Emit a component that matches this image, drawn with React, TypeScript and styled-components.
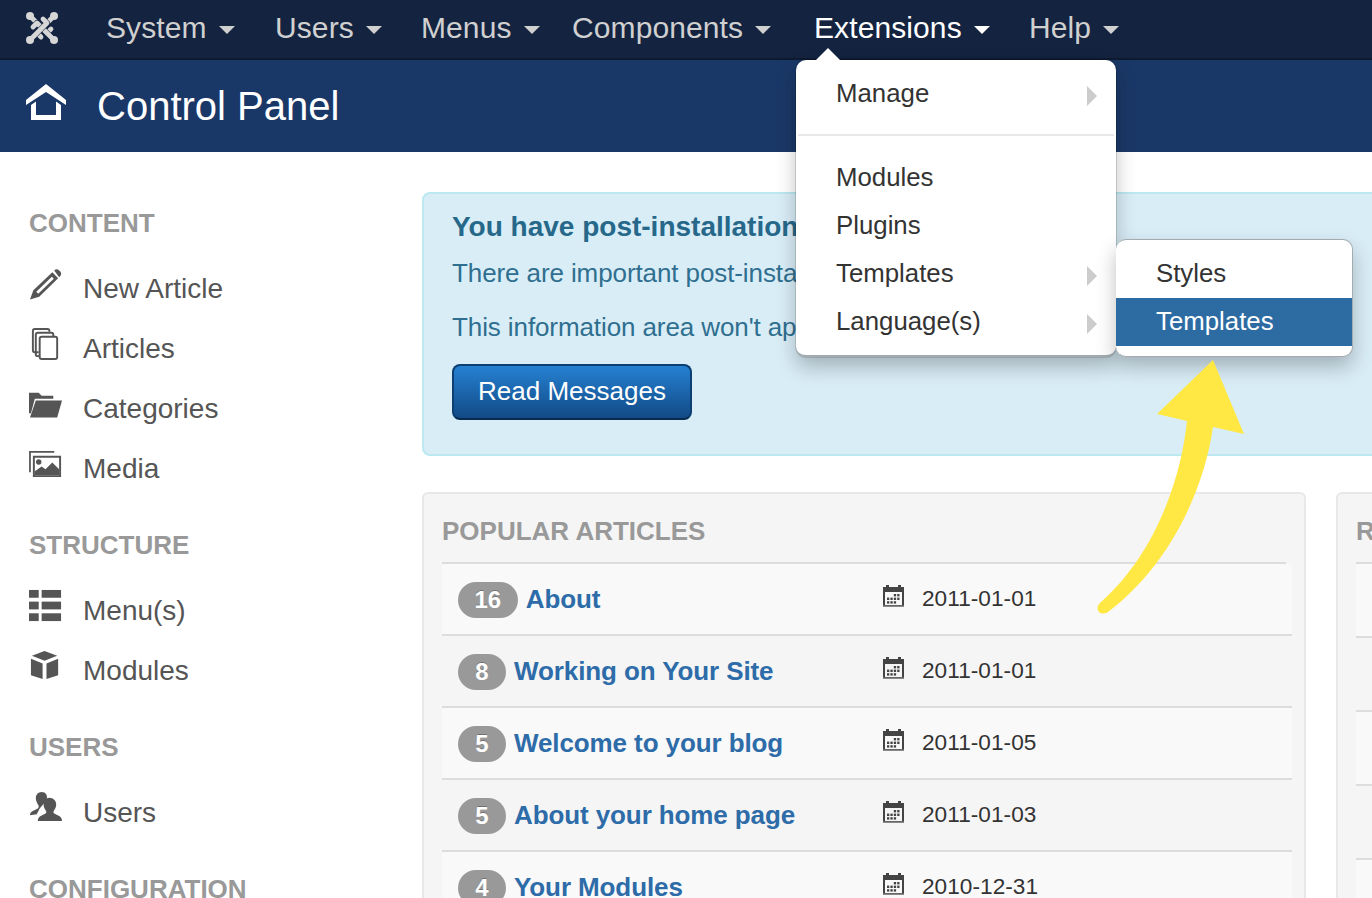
import React from "react";
import styled, { createGlobalStyle } from "styled-components";

const Global = createGlobalStyle`
  html, body { margin: 0; padding: 0; background: #fff; }
  body { font-family: "Liberation Sans", Arial, sans-serif; overflow: hidden; }
  * { box-sizing: border-box; }
`;

const Page = styled.div`
  position: relative;
  width: 1372px;
  height: 898px;
  overflow: hidden;
`;
const Navbar = styled.nav`
  height: 60px;
  background: #132340;
  border-bottom: 2px solid #0e1a30;
  display: flex;
  align-items: center;
  padding-left: 26px;
  color: #d9d9d9;
`;
const Logo = styled.svg`
  width: 32px;
  height: 32px;
  margin-right: 48px;
  margin-top: -2px;
`;
const NavItem = styled.div<{ $active?: boolean; $w: number }>`
  width: ${(p) => p.$w}px;
  display: flex;
  align-items: center;
  font-size: 30px;
  letter-spacing: 0.1px;
  margin-top: -2px;
  color: ${(p) => (p.$active ? "#fff" : "#d0d0d0")};
  white-space: nowrap;
`;
const Caret = styled.span`
  width: 0;
  height: 0;
  margin-left: 12px;
  margin-top: 3px;
  border-left: 8px solid transparent;
  border-right: 8px solid transparent;
  border-top: 8px solid currentColor;
`;
const Header = styled.header`
  height: 92px;
  background: #1a3867;
  display: flex;
  align-items: center;
  padding-left: 26px;
  color: #fff;
`;
const HomeIcon = styled.svg`
  width: 40px;
  height: 36px;
  margin-right: 31px;
  margin-top: -8px;
`;
const Title = styled.h1`
  margin: 0;
  font-weight: 400;
  font-size: 40px;
`;
const Body = styled.div`
  display: flex;
  padding-top: 40px;
`;
const Sidebar = styled.aside`
  width: 422px;
  flex: none;
  padding-left: 29px;
`;
const NavHead = styled.h3<{ $first?: boolean }>`
  margin: ${(p) => (p.$first ? 0 : 16)}px 0 4px;
  font-size: 26px;
  line-height: 62px;
  font-weight: 700;
  color: #999;
  white-space: nowrap;
`;
const SideItem = styled.div`
  height: 60px;
  padding-top: 2px;
  display: flex;
  align-items: center;
  font-size: 28px;
  color: #555;
`;
const SideIcon = styled.svg`
  width: 34px;
  height: 34px;
  margin-right: 20px;
  margin-top: -10px;
  flex: none;
  color: #555;
`;
const Main = styled.main`
  flex: none;
  width: 1000px;
`;
const Alert = styled.section`
  height: 264px;
  background: #d9edf7;
  border: 2px solid #bce8f1;
  border-radius: 8px;
  padding: 13px 0 0 28px;
  color: #2f6f8f;
  margin-bottom: 36px;
  white-space: nowrap;
`;
const AlertTitle = styled.h4`
  margin: 0 0 12px;
  font-size: 28px;
  line-height: 40px;
  font-weight: 700;
  color: #26688a;
`;
const AlertText = styled.p`
  margin: 0 0 26px;
  font-size: 26px;
  line-height: 28px;
  letter-spacing: -0.1px;
`;
const PrimaryButton = styled.button`
  display: block;
  width: 240px;
  height: 56px;
  margin-top: -3px;
  border: 2px solid #0d3f73;
  border-bottom-color: #082a50;
  border-radius: 8px;
  background: linear-gradient(#2581d2, #124a85);
  color: #fff;
  font: 400 26px "Liberation Sans", Arial, sans-serif;
  padding: 0 0 2px;
`;
const Panels = styled.div`
  display: flex;
  gap: 30px;
`;
const Panel = styled.section<{ $w: number }>`
  flex: none;
  width: ${(p) => p.$w}px;
  height: 440px;
  background: #f5f5f5;
  border: 2px solid #e8e8e8;
  border-radius: 6px;
  padding: 18px 0 0 18px;
`;
const PanelTitle = styled.h3`
  margin: 0 0 12px;
  font-size: 26px;
  line-height: 38px;
  font-weight: 700;
  color: #999;
  white-space: nowrap;
`;
const Rows = styled.div`
  margin-right: 18px;
  border-top: 2px solid #ddd;
`;
const Row = styled.div<{ $odd: boolean; $h: number }>`
  height: ${(p) => p.$h}px;
  margin-right: -6px;
  display: flex;
  align-items: center;
  padding: 2px 0 0 16px;
  background: ${(p) => (p.$odd ? "#f9f9f9" : "transparent")};
  border-bottom: 2px solid #ddd;
`;
const TitleCell = styled.div`
  width: 425px;
  display: flex;
  align-items: center;
  gap: 8px;
`;
const Badge = styled.span`
  min-width: 48px;
  height: 36px;
  padding: 0 16.5px;
  border-radius: 18px;
  background: #999;
  color: #fff;
  font-size: 24px;
  font-weight: 700;
  display: flex;
  align-items: center;
  justify-content: center;
  text-shadow: 0 -1px 0 rgba(0, 0, 0, 0.25);
`;
const ArticleLink = styled.span`
  font-size: 26px;
  font-weight: 700;
  color: #2d6ca8;
  white-space: nowrap;
  letter-spacing: -0.1px;
  margin-top: -2px;
`;
const DateCell = styled.div`
  display: flex;
  align-items: center;
  font-size: 22.6px;
  letter-spacing: 0.05px;
  color: #333;
  margin-top: -2px;
`;
const CalIcon = styled.svg`
  width: 21px;
  height: 24px;
  margin-right: 18px;
  margin-top: -6px;
`;
const Dropdown = styled.div`
  position: absolute;
  left: 796px;
  top: 60px;
  width: 320px;
  height: 297px;
  background: #fff;
  border-radius: 10px;
  border-bottom: 2px solid #a3abb0;
  box-shadow: 0 0 0 1px rgba(0,0,0,0.12), 0 10px 20px rgba(0, 0, 0, 0.25);
  padding-top: 10px;
  &::before {
    content: "";
    position: absolute;
    left: 19px;
    top: -12px;
    border-left: 13px solid transparent;
    border-right: 13px solid transparent;
    border-bottom: 13px solid #fff;
  }
`;
const MenuItem = styled.div<{ $active?: boolean }>`
  height: 48px;
  display: flex;
  align-items: center;
  justify-content: space-between;
  padding: 0 19px 2px 40px;
  font-size: 25.8px;
  color: ${(p) => (p.$active ? "#fff" : "#333")};
  background: ${(p) => (p.$active ? "#2d6ca2" : "transparent")};
`;
const MenuArrow = styled.span`
  width: 0;
  height: 0;
  margin-top: 6px;
  border-top: 10px solid transparent;
  border-bottom: 10px solid transparent;
  border-left: 10px solid #ccc;
`;
const Divider = styled.div`
  height: 2px;
  background: #e8e8e8;
  margin: 16px 2px 18px;
`;
const Submenu = styled.div`
  position: absolute;
  left: 1116px;
  top: 239px;
  width: 237px;
  height: 118px;
  background: #fff;
  border-radius: 10px;
  border: 1.5px solid #a3abb0;
  border-left: none;
  box-shadow: 0 10px 20px rgba(0, 0, 0, 0.25);
  padding-top: 10px;
  overflow: hidden;
`;
const Overlay = styled.svg`
  position: absolute;
  left: 0;
  top: 0;
  width: 1372px;
  height: 898px;
  pointer-events: none;
`;

const skipDots = new Set(["00", "01", "23"]);

const Cal = () => (
  <CalIcon viewBox="0 0 21 24">
    <path fill="#444" fillRule="evenodd" d="M0 3h3V1h3v2h9V1h3v2h3v20H0zM2 8v13h17V8z" />
    <g fill="#444">
      {[0, 1, 2].map((r) =>
        [0, 1, 2, 3].map((c) =>
          skipDots.has(`${r}${c}`) ? null : (
            <rect key={`${r}${c}`} x={4 + c * 3.4} y={10 + r * 3.6} width="2.3" height="2.4" />
          )
        )
      )}
    </g>
    <rect y="21.5" width="21" height="1.5" fill="#888" />
  </CalIcon>
);

const icons: Record<string, React.ReactNode> = {
  pencil: (
    <g fill="currentColor">
      <path fillRule="evenodd" d="M24 5.500 30 11.500 10.500 30.500 1 33.500 4.500 24zM23.500 10 7.500 25.500 9.500 27.500 25.500 12z" />
      <path d="M26 3.500c1.500-1.500 3.500-1.500 5 0l1 1c1.500 1.500 1.500 3.500 0 5l-1 1z" />
    </g>
  ),
  articles: (
    <>
      <path fill="none" stroke="currentColor" strokeWidth="2" d="M10 26H6a2 2 0 0 1-2-2V4a2 2 0 0 1 2-2h13a2 2 0 0 1 2 2v1" />
      <path fill="none" stroke="currentColor" strokeWidth="2" d="M11 30H9a2 2 0 0 1-2-2V8a2 2 0 0 1 2-2h14a2 2 0 0 1 2 2v2" />
      <rect x="11" y="10" width="18" height="23" rx="2" fill="#fff" stroke="currentColor" strokeWidth="2" />
    </>
  ),
  folder: (
    <path fill="currentColor" d="M0 6h10l3 3h12v3H6L2 27H0zm7 8h27l-5 17.500H1z" />
  ),
  media: (
    <>
      <path fill="none" stroke="currentColor" strokeWidth="1.800" d="M1 26V5h25" />
      <path fill="currentColor" fillRule="evenodd" d="M4 9h29v22H4zM6 11v18h25V11z" />
      <circle cx="10" cy="15.500" r="2.800" fill="currentColor" />
      <path fill="currentColor" d="M6 29v-4l7-5 4 3 7-7 7 7v6z" />
    </>
  ),
  menu: (
    <g fill="currentColor">
      <rect x="0" y="1" width="10" height="8" />
      <rect x="13" y="1" width="20" height="8" />
      <rect x="0" y="13" width="10" height="8" />
      <rect x="13" y="13" width="20" height="8" />
      <rect x="0" y="25" width="10" height="8" />
      <rect x="13" y="25" width="20" height="8" />
    </g>
  ),
  cube: (
    <g fill="currentColor">
      <path d="M16 2l13 5-13 5L3 7z" />
      <path d="M2 10l12 5v16L2 27z" />
      <path d="M30 10l-12 5v16l12-4z" />
    </g>
  ),
  users: (
    <g fill="currentColor">
      <path d="M13 1c4 0 6 3 5.500 6.500-.4 2-1.500 3.500-2.500 4.500l-5 6-3 6-7 1c0-2 1-3.500 3-4.500l5-2.500c1-.5 1.500-2 .5-3.500C8 12 7 10 7 7c0-3 2.500-6 6-6z" />
      <path d="M21 7c4 0 7 3 7 7 0 3-1.500 5-2.500 6.500-.6 1.200-.4 2.300 1 3l4 2c2 1 3.500 2.500 3.500 5.500H9c0-3 1.500-4.500 3.500-5.500l4-2c1.400-.7 1.600-1.800 1-3C16.500 19 15 17 15 14c0-4 2.500-7 6-7z" />
    </g>
  ),
};

const Side = ({ icon, label }: { icon: string; label: string }) => (
  <SideItem>
    <SideIcon viewBox="0 0 35 35">{icons[icon]}</SideIcon>
    {label}
  </SideItem>
);

const nav: [string, number, boolean?][] = [
  ["System", 169],
  ["Users", 146],
  ["Menus", 151],
  ["Components", 242],
  ["Extensions", 215, true],
  ["Help", 120],
];

const articles: [string, string, string][] = [
  ["16", "About", "2011-01-01"],
  ["8", "Working on Your Site", "2011-01-01"],
  ["5", "Welcome to your blog", "2011-01-05"],
  ["5", "About your home page", "2011-01-03"],
  ["4", "Your Modules", "2010-12-31"],
];

const hooks = [
  "M4 4 L21 21 L25 17",
  "M28 4 L11 21 L15 25",
  "M28 28 L11 11 L7 15",
  "M4 28 L21 11 L17 7",
];

export default function App() {
  return (
    <Page>
      <Global />
      <Navbar>
        <Logo viewBox="0 0 32 32">
          <g fill="none" strokeLinecap="round" strokeLinejoin="round">
            {hooks.map((d) => (
              <React.Fragment key={d}>
                <path d={d} stroke="#132340" strokeWidth="6" />
                <path d={d} stroke="#d6d6d6" strokeWidth="4.800" />
              </React.Fragment>
            ))}
          </g>
          <g fill="#d6d6d6">
            <circle cx="4" cy="4" r="4" />
            <circle cx="28" cy="4" r="4" />
            <circle cx="4" cy="28" r="4" />
            <circle cx="28" cy="28" r="4" />
          </g>
        </Logo>
        {nav.map(([label, w, active]) => (
          <NavItem key={label} $w={w} $active={active}>
            {label}
            <Caret />
          </NavItem>
        ))}
      </Navbar>
      <Header>
        <HomeIcon viewBox="0 0 40 36" fill="#fff">
          <path d="M20 0 40 16v5L20 8 0 21v-5z" />
          <path d="M5 21 10 17.500V31H30V17.500L35 21V36H5z" />
        </HomeIcon>
        <Title>Control Panel</Title>
      </Header>
      <Body>
        <Sidebar>
          <NavHead $first>CONTENT</NavHead>
          <Side icon="pencil" label="New Article" />
          <Side icon="articles" label="Articles" />
          <Side icon="folder" label="Categories" />
          <Side icon="media" label="Media" />
          <NavHead>STRUCTURE</NavHead>
          <Side icon="menu" label="Menu(s)" />
          <Side icon="cube" label="Modules" />
          <NavHead>USERS</NavHead>
          <Side icon="users" label="Users" />
          <NavHead>CONFIGURATION</NavHead>
        </Sidebar>
        <Main>
          <Alert>
            <AlertTitle>You have post-installation messages</AlertTitle>
            <AlertText>There are important post-installation messages that require your attention.</AlertText>
            <AlertText>This information area won't appear when you have hidden all the messages.</AlertText>
            <PrimaryButton>Read Messages</PrimaryButton>
          </Alert>
          <Panels>
            <Panel $w={884}>
              <PanelTitle>POPULAR ARTICLES</PanelTitle>
              <Rows>
                {articles.map(([n, t, d], i) => (
                  <Row key={t} $h={72} $odd={i % 2 === 0}>
                    <TitleCell>
                      <Badge>{n}</Badge>
                      <ArticleLink>{t}</ArticleLink>
                    </TitleCell>
                    <DateCell>
                      <Cal />
                      {d}
                    </DateCell>
                  </Row>
                ))}
              </Rows>
            </Panel>
            <Panel $w={300}>
              <PanelTitle>RECENTLY ADDED</PanelTitle>
              <Rows>
                {[0, 1, 2, 3, 4].map((i) => (
                  <Row key={i} $h={74} $odd={i % 2 === 0} />
                ))}
              </Rows>
            </Panel>
          </Panels>
        </Main>
      </Body>
      <Dropdown>
        <MenuItem>
          Manage
          <MenuArrow />
        </MenuItem>
        <Divider />
        <MenuItem>Modules</MenuItem>
        <MenuItem>Plugins</MenuItem>
        <MenuItem>
          Templates
          <MenuArrow />
        </MenuItem>
        <MenuItem>
          Language(s)
          <MenuArrow />
        </MenuItem>
      </Dropdown>
      <Submenu>
        <MenuItem>Styles</MenuItem>
        <MenuItem $active>Templates</MenuItem>
      </Submenu>
      <Overlay viewBox="0 0 1372 898">
        <path
          fill="#ffe844"
          d="M1213 360 L1157 414 L1187 421 C1182 470 1160 550 1100 603 C1094 609 1100 617 1108 612 C1170 565 1204 490 1213 427 L1244 434 Z"
        />
      </Overlay>
    </Page>
  );
}
